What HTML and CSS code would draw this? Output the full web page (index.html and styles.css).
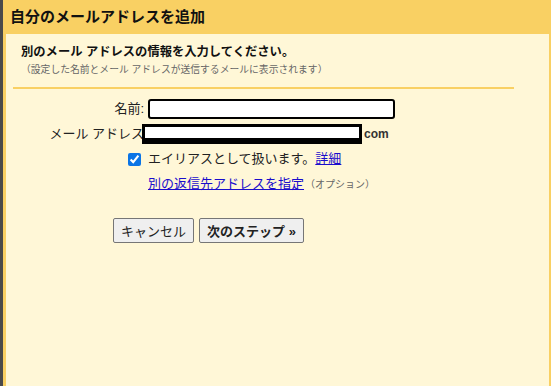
FILE: index.html
```html
<!DOCTYPE html>
<html lang="ja">
<head>
    <meta charset="UTF-8">
    <meta name="viewport" content="width=device-width, initial-scale=1.0">
    <title>自分のメールアドレスを追加</title>
    <link rel="stylesheet" href="styles.css">
</head>
<body>
    <div class="window">
        <div class="edge"></div>
        <div class="dialog">
            <h1 class="dialog-title">自分のメールアドレスを追加</h1>
            <div class="panel">
                <p class="lead">別のメール アドレスの情報を入力してください。</p>
                <p class="note">（設定した名前とメール アドレスが送信するメールに表示されます）</p>
                <hr class="rule">

                <form class="form" onsubmit="return false">
                    <label class="form-label" for="name">名前:</label>
                    <input class="text-input" id="name" type="text">

                    <label class="form-label" for="email">メール アドレス</label>
                    <div class="email-field">
                        <span class="redacted" id="email"></span>
                        <span class="domain">com</span>
                    </div>

                    <input class="check" id="alias" type="checkbox" checked>
                    <label class="check-text" for="alias">エイリアスとして扱います。<a href="#">詳細</a></label>

                    <span></span>
                    <div class="reply-to"><a href="#">別の返信先アドレスを指定</a><span class="optional">（オプション）</span></div>
                </form>

                <div class="actions">
                    <button type="button" class="btn">キャンセル</button>
                    <button type="button" class="btn btn-primary">次のステップ »</button>
                </div>
            </div>
        </div>
    </div>
</body>
</html>
```

FILE: styles.css
```css
* {
    margin: 0;
    padding: 0;
    box-sizing: border-box;
}

body {
    font-family: "Liberation Sans", "Noto Sans CJK JP", sans-serif;
    color: #222;
    background: #fff7d7;
    height: 386px;
    overflow: hidden;
}

.window {
    display: flex;
    height: 386px;
}

.edge {
    width: 3px;
    background: #4a4a4a;
}

.dialog {
    flex: 1;
    display: flex;
    flex-direction: column;
    background: #f9d063;
    padding-right: 2px;
}

.dialog-title {
    height: 34px;
    padding: 7px 0 0 7px;
    font-size: 15px;
    line-height: 20px;
    font-weight: bold;
    color: #111;
}

.panel {
    flex: 1;
    background: #fff7d7;
    margin-left: 3px;
    padding-top: 10px;
}

.lead {
    padding-left: 15px;
    font-size: 12.3px;
    line-height: 16px;
    font-weight: bold;
    color: #111;
}

.note {
    margin-top: 3px;
    padding-left: 15px;
    font-size: 9.8px;
    line-height: 14px;
    color: #666;
}

.rule {
    border: none;
    height: 2px;
    background: #f9d063;
    margin: 10px 35px 0 7px;
}

/* form grid: labels right aligned, fields after */
.form {
    display: grid;
    grid-template-columns: 138px 1fr;
    column-gap: 4px;
    row-gap: 5px;
    margin-top: 10px;
    align-items: center;
    font-size: 13px;
}

.form-label {
    text-align: right;
    line-height: 20px;
}

.text-input {
    width: 247px;
    height: 20px;
    border: 2px solid #000;
    border-radius: 3px;
    background: #fff;
}

.email-field {
    display: flex;
    align-items: center;
    margin-left: -6px;
    height: 20px;
}

.redacted {
    width: 220px;
    height: 20px;
    border: solid #000;
    border-width: 3px 3px 6px 3px;
    background: #fff;
}

.domain {
    margin-left: 2px;
    font-size: 12px;
    font-weight: bold;
    color: #333;
}

.check {
    justify-self: end;
    width: 13px;
    height: 13px;
    margin: 0 3px 0 0;
    accent-color: #0b74e5;
}

.check-text {
    line-height: 20px;
}

a {
    color: #1a0dcc;
    text-decoration: underline;
}

.reply-to {
    line-height: 19px;
}

.optional {
    font-size: 10px;
    color: #666;
    margin-left: 1px;
}

.actions {
    display: flex;
    gap: 5px;
    margin-top: 24px;
    padding-left: 107px;
}

.btn {
    font-family: inherit;
    font-size: 13px;
    height: 25px;
    padding: 0 7px;
    background: #efefef;
    color: #222;
    border: 1px solid #767676;
    border-radius: 2px;
}

.btn-primary {
    font-weight: bold;
    padding: 0 7px;
}
```
